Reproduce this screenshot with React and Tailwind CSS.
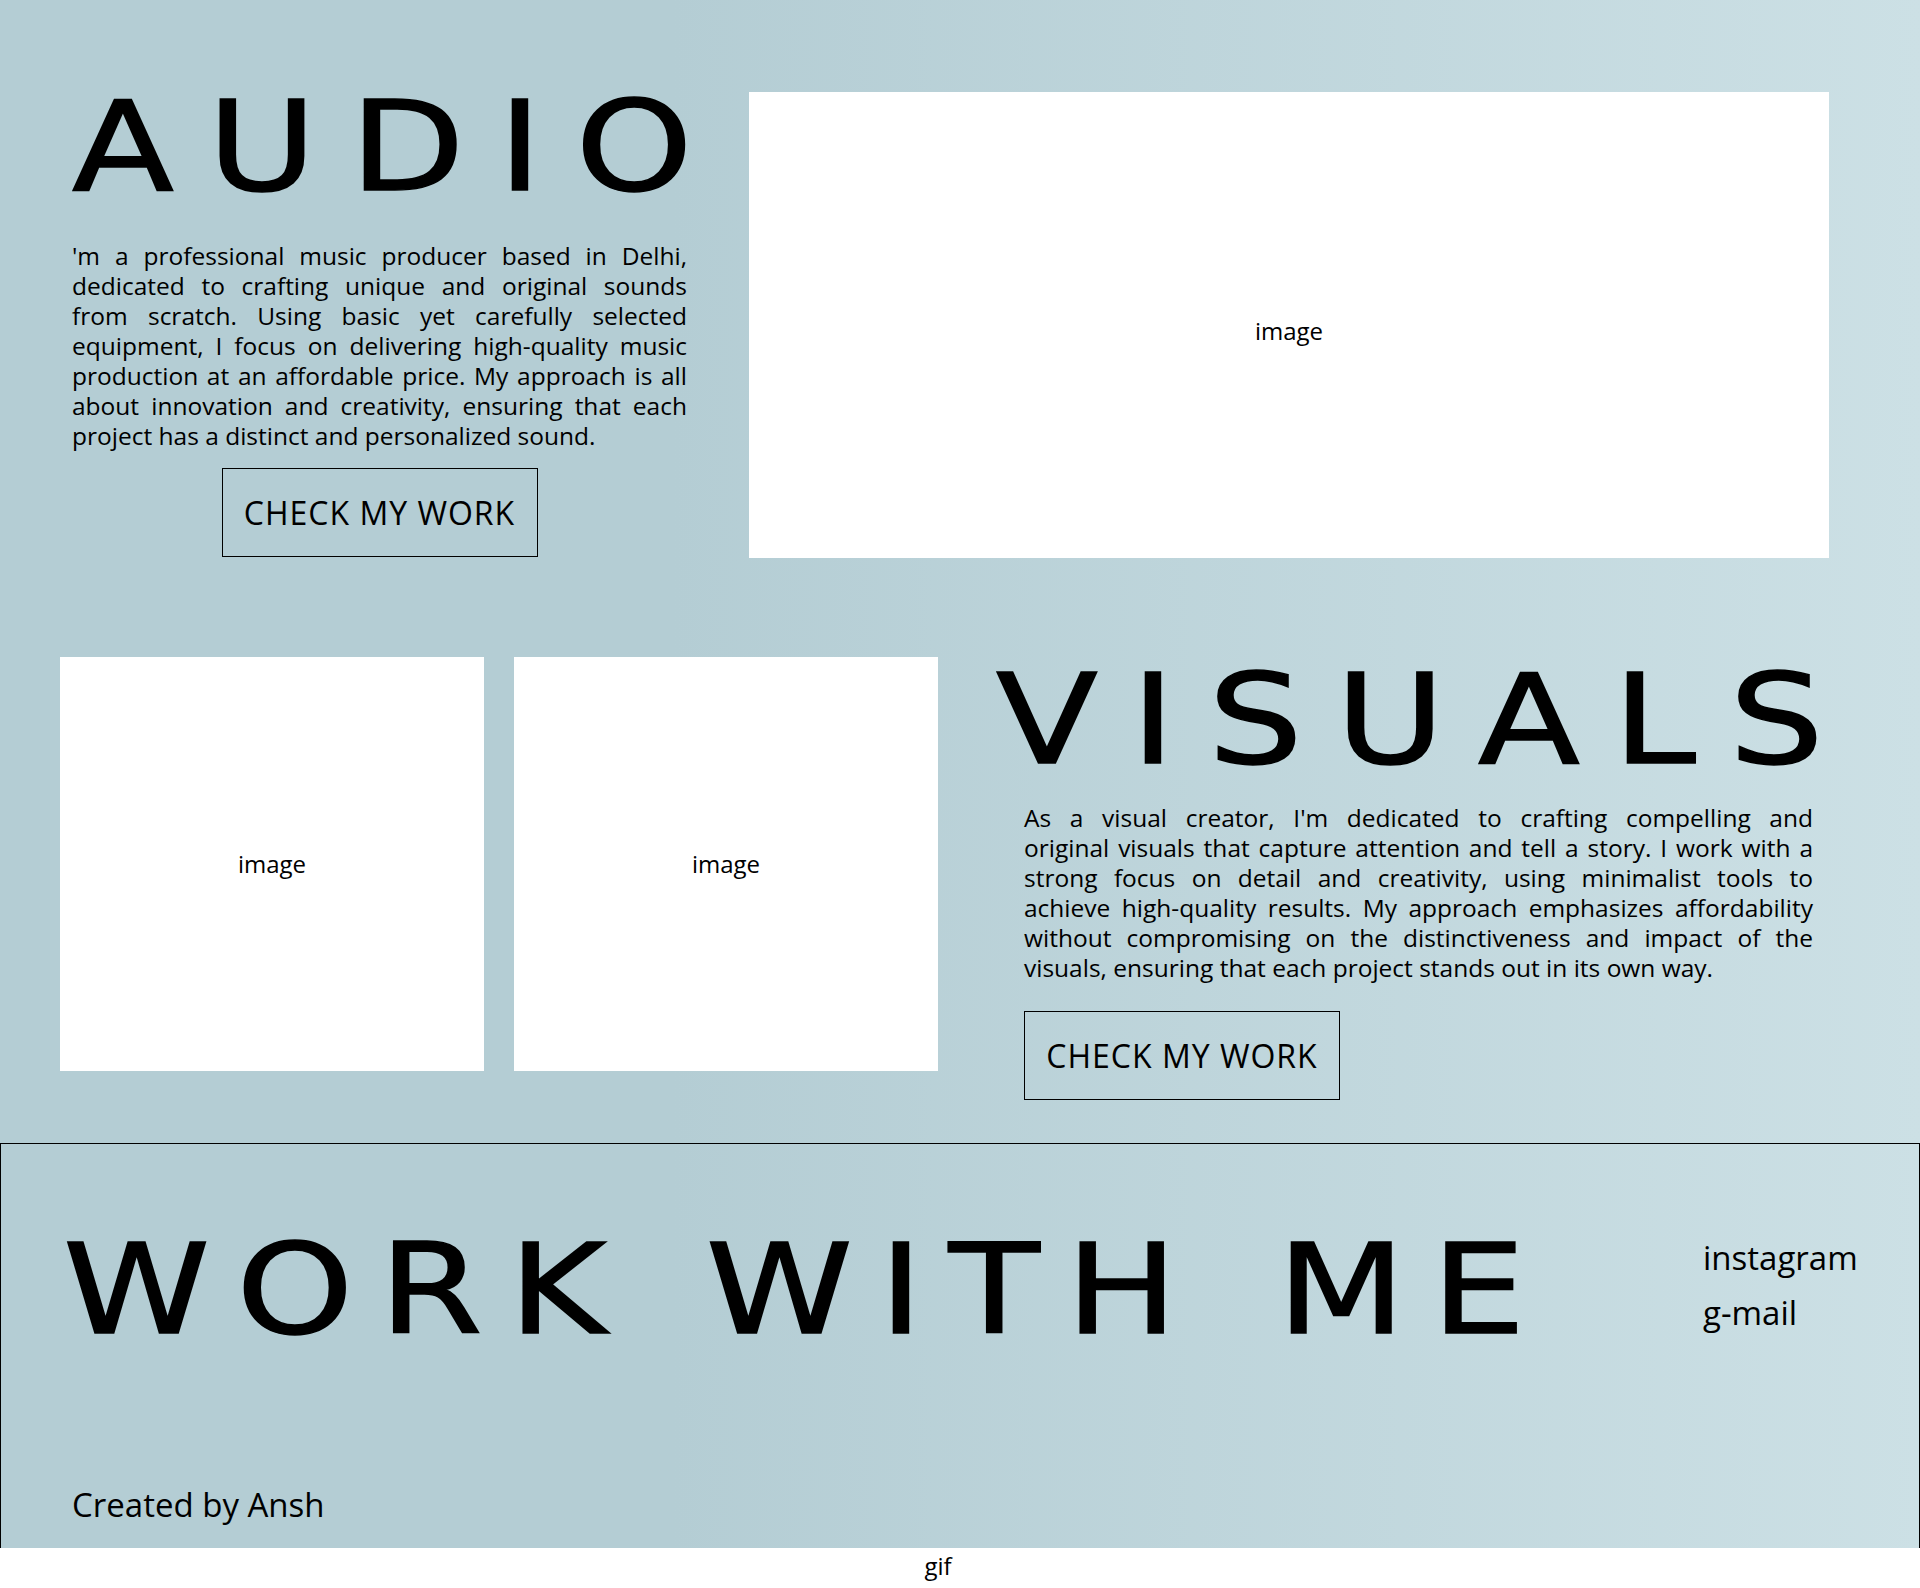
const p1 = [
  "'m a professional music producer based in Delhi,",
  "dedicated to crafting unique and original sounds",
  "from scratch. Using basic yet carefully selected",
  "equipment, I focus on delivering high-quality music",
  "production at an affordable price. My approach is all",
  "about innovation and creativity, ensuring that each",
  "project has a distinct and personalized sound.",
];

const p2 = [
  "As a visual creator, I'm dedicated to crafting compelling and",
  "original visuals that capture attention and tell a story. I work with a",
  "strong focus on detail and creativity, using minimalist tools to",
  "achieve high-quality results. My approach emphasizes affordability",
  "without compromising on the distinctiveness and impact of the",
  "visuals, ensuring that each project stands out in its own way.",
];

function Para({ lines, className }) {
  return (
    <div className={"text-[24.5px] leading-[30px] " + className}>
      {lines.map((l, i) =>
        i < lines.length - 1 ? (
          <span key={i} className="block whitespace-nowrap text-justify [text-align-last:justify]">
            {l}
          </span>
        ) : (
          <span key={i} className="block whitespace-nowrap">
            {l}
          </span>
        )
      )}
    </div>
  );
}

function Btn({ className }) {
  return (
    <button className={"w-[316px] h-[89px] border border-black flex items-center justify-center text-[32px] tracking-[1px] leading-none text-black " + className}>
      CHECK MY WORK
    </button>
  );
}

const head = "font-['DejaVu_Sans',sans-serif] font-normal text-[124px] leading-[111px] whitespace-nowrap [-webkit-text-stroke:1.5px_black]";

export default function App() {
  return (
    <div className="bg-white text-black font-['Open_Sans','Lato',sans-serif]">
      <div className="bg-linear-to-r from-[#b4cdd4] from-35% to-[#cce0e5]">
        <section className="flex items-start pt-[92px] pl-[72px] gap-[62px]">
          <div className="w-[615px] shrink-0 flex flex-col">
            <h1 className={head}>
              <span className="inline-block origin-left scale-x-[1.2] tracking-[28px]">AUDIO</span>
            </h1>
            <Para lines={p1} className="mt-[38px]" />
            <Btn className="self-center mt-[17px]" />
          </div>
          <div className="w-[1080px] h-[466px] shrink-0 bg-white flex items-center justify-center pt-[12px] text-[24px]">
            image
          </div>
        </section>

        <section className="flex items-start pt-[99px] pl-[60px]">
          <div className="flex gap-[30px] shrink-0">
            <div className="w-[424px] h-[414px] bg-white flex items-center justify-center text-[24px]">image</div>
            <div className="w-[424px] h-[414px] bg-white flex items-center justify-center text-[24px]">image</div>
          </div>
          <div className="ml-[58px] flex flex-col">
            <h2 className={"mt-[8px] " + head}>
              <span className="inline-block origin-left scale-x-[1.2] tracking-[27.7px]">VISUALS</span>
            </h2>
            <Para lines={p2} className="ml-[28px] w-[789px] mt-[27px]" />
            <Btn className="ml-[28px] mt-[28px]" />
          </div>
        </section>

        <footer className="mt-[43px] h-[405px] border-t border-x border-black flex flex-col">
          <div className="flex items-start pt-[91px] pl-[62px]">
            <h2 className={"flex-1 " + head}>
              <span className="inline-block origin-left scale-x-[1.2] tracking-[21.7px]">WORK WITH ME</span>
            </h2>
            <div className="w-[216px] shrink-0 mt-[3px] flex flex-col gap-[15px] text-[33px] leading-[40px]">
              <a>instagram</a>
              <a>g-mail</a>
            </div>
          </div>
          <div className="mt-auto pl-[71px] pb-[23px] text-[33px] leading-[40px]">Created by Ansh</div>
        </footer>
      </div>
      <div className="pt-[3px] pr-[44px] text-center text-[24px] leading-[30px] h-[40px]">gif</div>
    </div>
  );
}
